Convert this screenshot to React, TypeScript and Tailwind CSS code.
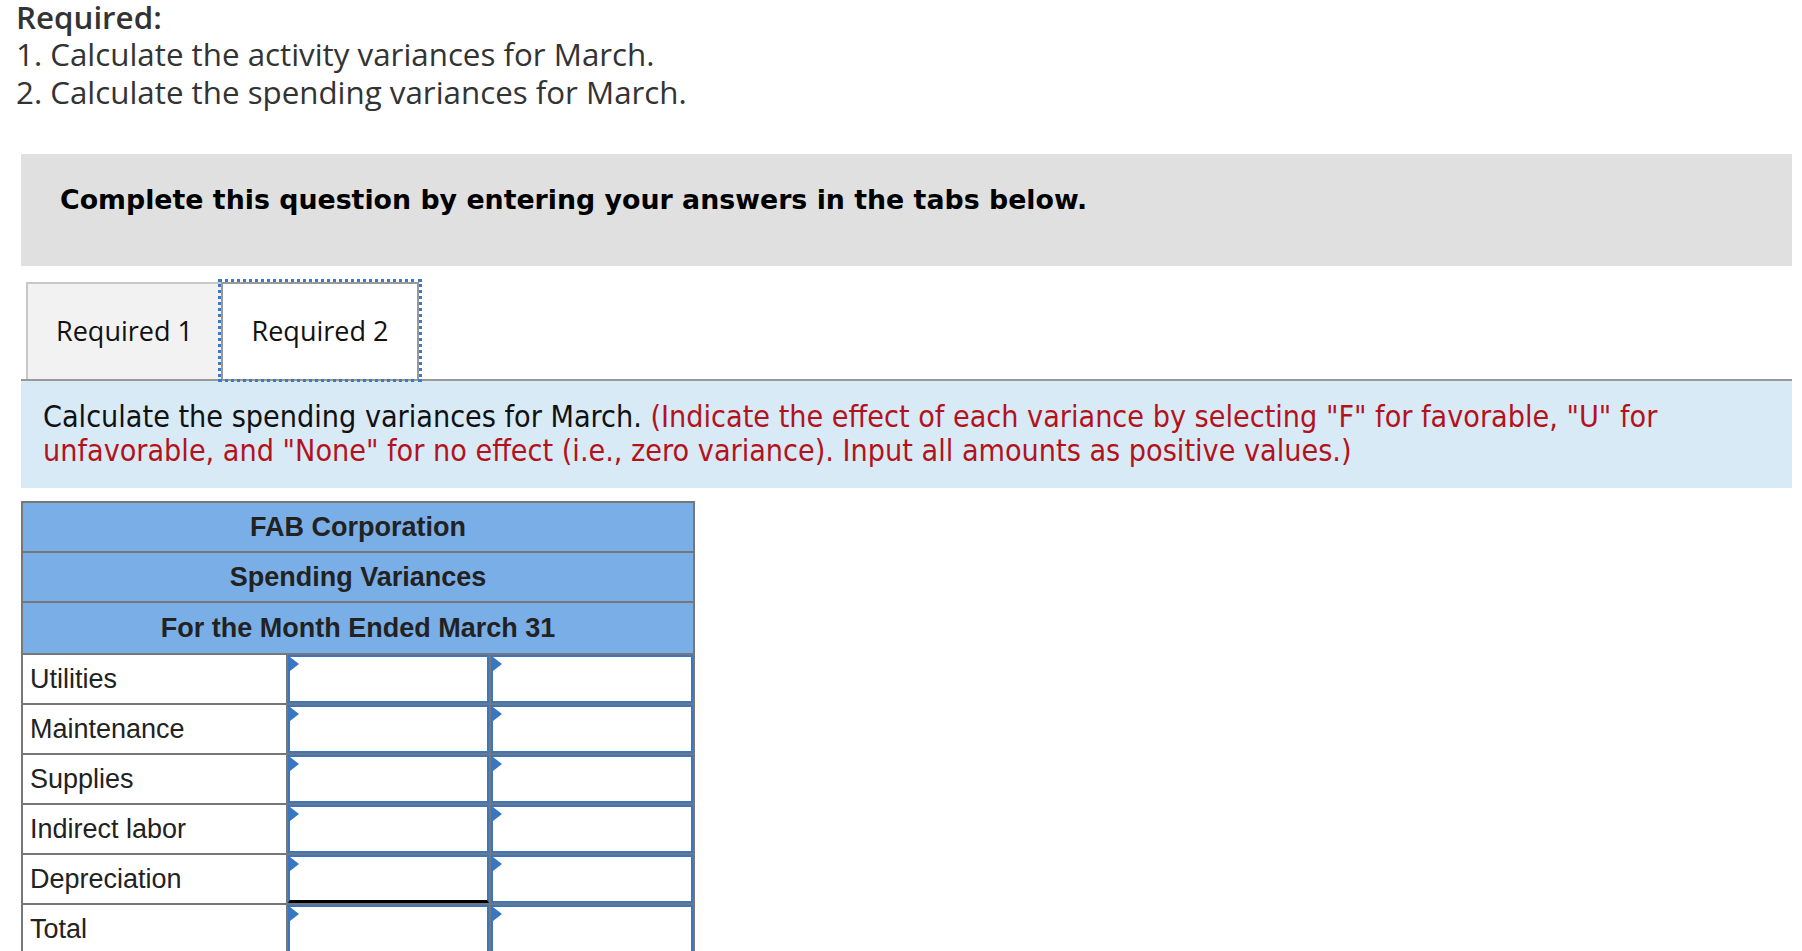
import React from 'react'

const rows = ['Utilities', 'Maintenance', 'Supplies', 'Indirect labor', 'Depreciation', 'Total']

const InputCell = ({ totalLine = false }: { totalLine?: boolean }) => (
  <div className="bg-white">
    <div
      className={
        totalLine
          ? 'relative h-full border-2 border-b-[3px] border-[#3a77c2] border-b-black'
          : 'relative h-full border-2 border-[#3a77c2]'
      }
    >
      <span className="absolute left-0 top-0 h-0 w-0 border-y-[7px] border-l-[9px] border-y-transparent border-l-[#3a77c2]" />
    </div>
  </div>
)

const App = () => {
  return (
    <div className="min-h-screen overflow-hidden bg-white pl-[16px] pr-[10px]">
      <div className="font-['Open_Sans',sans-serif] text-[31.3px] text-[#333]">
        <p className="font-semibold leading-[34px]">Required:</p>
        <div className="mt-[1px] leading-[38px]">
          <p>1. Calculate the activity variances for March.</p>
          <p>2. Calculate the spending variances for March.</p>
        </div>
      </div>

      <div className="ml-[5px] mt-[43px]">
        <div className="h-[112px] bg-[#e0e0e0] pl-[39px] pt-[30px]">
          <p className="font-['DejaVu_Sans',sans-serif] text-[26.8px] font-bold leading-[32px] text-black">
            Complete this question by entering your answers in the tabs below.
          </p>
        </div>

        <div className="mt-[16px] flex pl-[5px] font-['Open_Sans',sans-serif] text-[27px] text-[#111]">
          <button className="flex h-[97px] w-[195px] items-center justify-center border-l-2 border-t-2 border-[#c8c8c8] bg-[#f2f2f2]">
            Required 1
          </button>
          <button className="flex h-[97px] w-[198px] items-center justify-center border-2 border-b-0 border-[#999] bg-white outline-[3px] outline-dotted outline-[#3a7bc8]">
            Required 2
          </button>
        </div>
        <div className="h-[2px] bg-[#999]" />

        <div className="h-[107px] bg-[#d9eaf7] pl-[22px] pt-[19px] font-['DejaVu_Sans_Condensed','DejaVu_Sans',sans-serif] text-[30.2px] leading-[34px] text-[#111]">
          Calculate the spending variances for March.{' '}
          <span className="text-[#b4121b]">
            (Indicate the effect of each variance by selecting "F" for favorable, "U" for
            <br />
            unfavorable, and "None" for no effect (i.e., zero variance). Input all amounts as positive values.)
          </span>
        </div>

        <div className="mt-[13px] grid w-[674px] grid-cols-[263px_201px_202px] gap-[2px] bg-[#777] p-[2px] font-['Liberation_Sans',Arial,sans-serif] text-[27px] text-[#222]">
          <div className="col-span-3 flex h-[48px] items-center justify-center bg-[#7aaee6] font-bold">FAB Corporation</div>
          <div className="col-span-3 flex h-[48px] items-center justify-center bg-[#7aaee6] font-bold">Spending Variances</div>
          <div className="col-span-3 flex h-[50px] items-center justify-center bg-[#7aaee6] font-bold">
            For the Month Ended March 31
          </div>
          {rows.map((r) => (
            <React.Fragment key={r}>
              <div className="flex h-[48px] items-center bg-white pl-[7px]">{r}</div>
              <InputCell totalLine={r === 'Depreciation'} />
              <InputCell />
            </React.Fragment>
          ))}
        </div>
      </div>
    </div>
  )
}

export default App
